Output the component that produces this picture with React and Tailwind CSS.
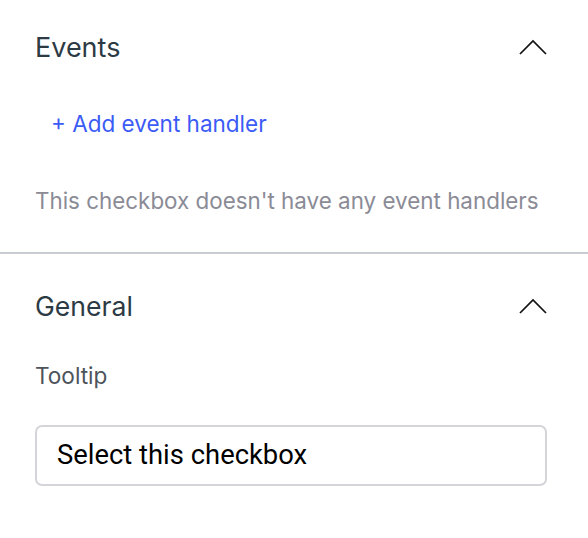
export default function App() {
  const Chevron = () => (
    <svg width="28" height="16" viewBox="0 0 28 16" fill="none" className="shrink-0">
      <path d="M1 15 L14 2 L27 15" stroke="#111" strokeWidth="1.7" />
    </svg>
  );
  return (
    <div className="w-[588px] h-[538px] bg-white" style={{ fontFamily: "Inter, 'Noto Sans', sans-serif" }}>
      <div className="pl-[35px] pr-[41px]">
        <div className="h-[94px] flex items-center justify-between">
          <span className="text-[27px] leading-none text-[#2c3a44]">Events</span>
          <Chevron />
        </div>
        <div className="h-[60px] flex items-center pl-[16px]">
          <span className="text-[22.5px] leading-none text-[#3b5bf6]">+ Add event handler</span>
        </div>
        <div className="h-[94px] flex items-center">
          <span className="text-[22.4px] leading-none text-[#8b8b96] whitespace-nowrap">This checkbox doesn't have any event handlers</span>
        </div>
      </div>
      <div className="mt-[4px] border-t-2 border-[#c9ccd0]" />
      <div className="pl-[35px] pr-[41px]">
        <div className="h-[104px] flex items-center justify-between">
          <span className="text-[26.6px] leading-none text-[#2c3a44]">General</span>
          <Chevron />
        </div>
        <div className="h-[36px] flex items-center">
          <span className="text-[22.6px] leading-none text-[#4d545b]">Tooltip</span>
        </div>
        <div className="mt-[31px] h-[61px] border-2 border-[#d3d5d9] rounded-[7px] flex items-center px-[20px]">
          <span className="text-[27.4px] leading-none text-black" style={{ fontFamily: "Roboto, sans-serif" }}>Select this checkbox</span>
        </div>
      </div>
    </div>
  );
}
